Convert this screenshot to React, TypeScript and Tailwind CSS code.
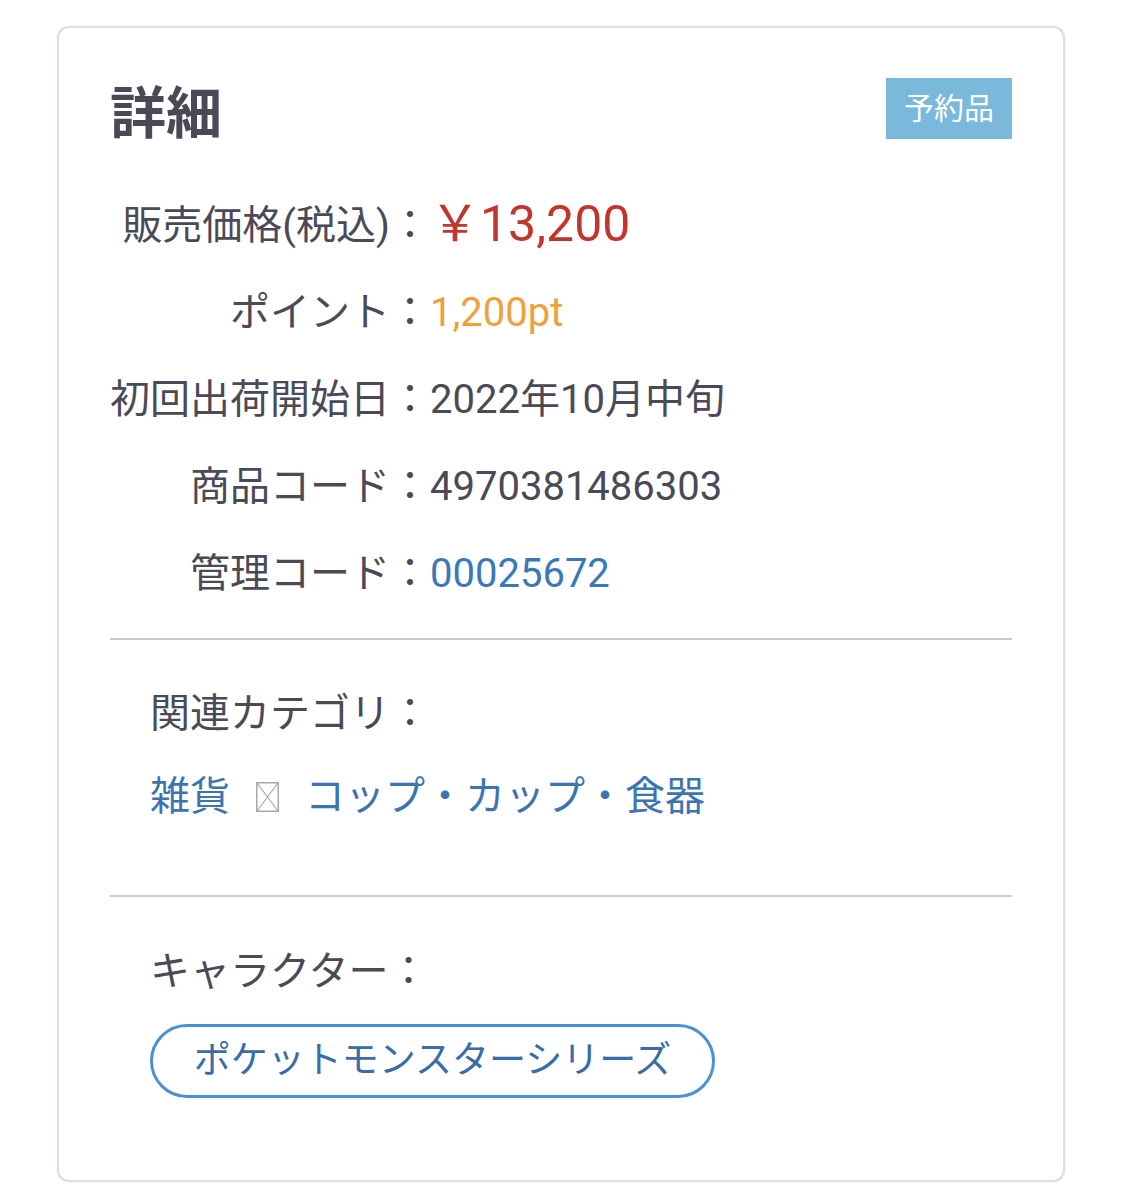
const FONT = "font-['Roboto','Noto_Sans_CJK_JP',sans-serif]";

const ROWS: { label: string; value: React.ReactNode }[] = [
  {
    label: "販売価格(税込)：",
    value: <span className="-mt-[4px] text-[50px] leading-none text-[#c0362c]">￥13,200</span>,
  },
  { label: "ポイント：", value: <span className="text-[#f0a03a]">1,200pt</span> },
  { label: "初回出荷開始日：", value: <span>2022年10月中旬</span> },
  { label: "商品コード：", value: <span>4970381486303</span> },
  { label: "管理コード：", value: <span className="text-[#3a78b8]">00025672</span> },
];

function MissingGlyph() {
  return (
    <svg width="23" height="30" viewBox="0 0 23 30" className="shrink-0">
      <rect x="0.75" y="0.75" width="21.5" height="28.5" fill="none" stroke="#a8a8a8" strokeWidth="1.5" />
      <path d="M1 1 L22 29 M22 1 L1 29" stroke="#a8a8a8" strokeWidth="1.2" />
    </svg>
  );
}

export default function App() {
  return (
    <div className={`w-[1122px] min-h-[1200px] bg-white pt-[26px] pl-[57px] ${FONT}`}>
      <div className="w-[1008px] h-[1156px] border-2 border-[#dedede] rounded-[12px] bg-white px-[51px] pt-[50px] shadow-[0_0_3px_rgba(0,0,0,0.06)]">
        {/* Header */}
        <div className="flex items-start justify-between">
          <h1 className="mt-[6px] text-[56px] leading-[61px] font-bold text-[#4a4a57]">詳細</h1>
          <span className="h-[61px] w-[126px] flex items-center justify-center bg-[#7ab8dc] text-white text-[30px]">
            予約品
          </span>
        </div>

        {/* Spec rows */}
        <div className="mt-[37px] grid grid-cols-[320px_1fr] text-[40px] text-[#4a4a56]">
          {ROWS.map((r) => (
            <div key={r.label} className="contents">
              <div className="h-[87px] flex items-center justify-end leading-none whitespace-nowrap">{r.label}</div>
              <div className="h-[87px] flex items-center leading-none whitespace-nowrap">{r.value}</div>
            </div>
          ))}
        </div>

        <div className="mt-[21px] h-[2px] bg-[#cccccc]" />

        {/* Related categories */}
        <div className="pl-[40px] text-[40px]">
          <p className="mt-[44px] h-[60px] leading-[60px] text-[#4a4a56]">関連カテゴリ：</p>
          <div className="mt-[23px] h-[60px] flex items-center text-[#3d74b0]">
            <span>雑貨</span>
            <span className="ml-[26px] mr-[26px]">
              <MissingGlyph />
            </span>
            <span>コップ・カップ・食器</span>
          </div>
        </div>

        <div className="mt-[68px] h-[2px] bg-[#cccccc]" />

        {/* Characters */}
        <div className="pl-[40px]">
          <p className="mt-[45px] h-[60px] leading-[60px] text-[40px] text-[#4a4a56]">キャラクター：</p>
          <div className="mt-[22px] w-[565px] h-[74px] rounded-full border-[3px] border-[#4a90d4] flex items-center justify-center text-[37px] text-[#3a6ca6]">
            ポケットモンスターシリーズ
          </div>
        </div>
      </div>
    </div>
  );
}
